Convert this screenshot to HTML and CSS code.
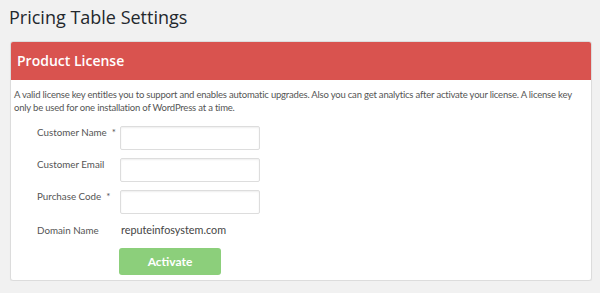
FILE: index.html
```html
<!DOCTYPE html>
<html>
<head>
<meta charset="utf-8">
<link rel="stylesheet" href="styles.css">
</head>
<body>
<div class="wrap">
  <h1 class="page-title">Pricing Table Settings</h1>
  <div class="panel">
    <div class="panel-head">Product License</div>
    <div class="panel-body">
      <p class="desc">A valid license key entitles you to support and enables automatic upgrades. Also you can get analytics after activate your license. A license key only be used for one installation of WordPress at a time.</p>
      <div class="form">
        <label class="lbl">Customer Name &nbsp;*</label>
        <input class="field" type="text">
        <label class="lbl">Customer Email</label>
        <input class="field" type="text">
        <label class="lbl">Purchase Code &nbsp;*</label>
        <input class="field" type="text">
        <span class="lbl lbl-domain">Domain Name</span>
        <span class="domain">reputeinfosystem.com</span>
        <span></span>
        <button class="btn" type="button">Activate</button>
      </div>
    </div>
  </div>
</div>
</body>
</html>
```
FILE: styles.css
```css
html, body {
  margin: 0;
  padding: 0;
  background: #f1f1f1;
  font-family: "Lato", "Open Sans", sans-serif;
}
.wrap {
  padding: 4px 8px 0 10px;
}
.page-title {
  margin: 0 0 0 -1px;
  font-family: "Open Sans", sans-serif;
  font-size: 18px;
  font-weight: 400;
  color: #23282d;
  line-height: 26px;
  height: 37px;
}
.panel {
  width: 580px;
  background: #fff;
  border: 1px solid #dcdcdc;
  border-radius: 3px;
  box-shadow: 0 1px 1px rgba(0,0,0,0.05);
  overflow: hidden;
}
.panel-head {
  background: #d9534f;
  color: #fff;
  font-family: "Open Sans", sans-serif;
  font-size: 14px;
  font-weight: 600;
  height: 38px;
  line-height: 38px;
  padding-left: 6px;
}
.panel-body {
  padding: 8px 2px 5px 3px;
}
.desc {
  margin: 0;
  font-size: 9.5px;
  letter-spacing: -0.2px;
  line-height: 13px;
  color: #555;
}
.form {
  display: grid;
  grid-template-columns: 83px 140px;
  row-gap: 8px;
  margin: 12px 0 0 23px;
  align-items: start;
}
.lbl {
  font-size: 9.8px;
  color: #555;
  line-height: 12px;
  white-space: nowrap;
}
.lbl-domain {
  line-height: 16px;
}
.field {
  width: 140px;
  height: 24px;
  box-sizing: border-box;
  border: 1px solid #ddd;
  border-radius: 2px;
  box-shadow: inset 0 1px 2px rgba(0,0,0,0.07);
  margin: 0;
  padding: 0 4px;
  background: #fff;
}
.domain {
  font-size: 10.8px;
  color: #444;
  line-height: 16px;
  padding-left: 1px;
}
.btn {
  grid-column: 2;
  margin-top: 2px;
  margin-left: -1px;
  width: 102px;
  height: 27px;
  border: none;
  border-radius: 3px;
  background: #8ccf7b;
  color: #fff;
  font-family: "Lato", "Open Sans", sans-serif;
  font-size: 12px;
  font-weight: 700;
  padding: 0;
}
```
